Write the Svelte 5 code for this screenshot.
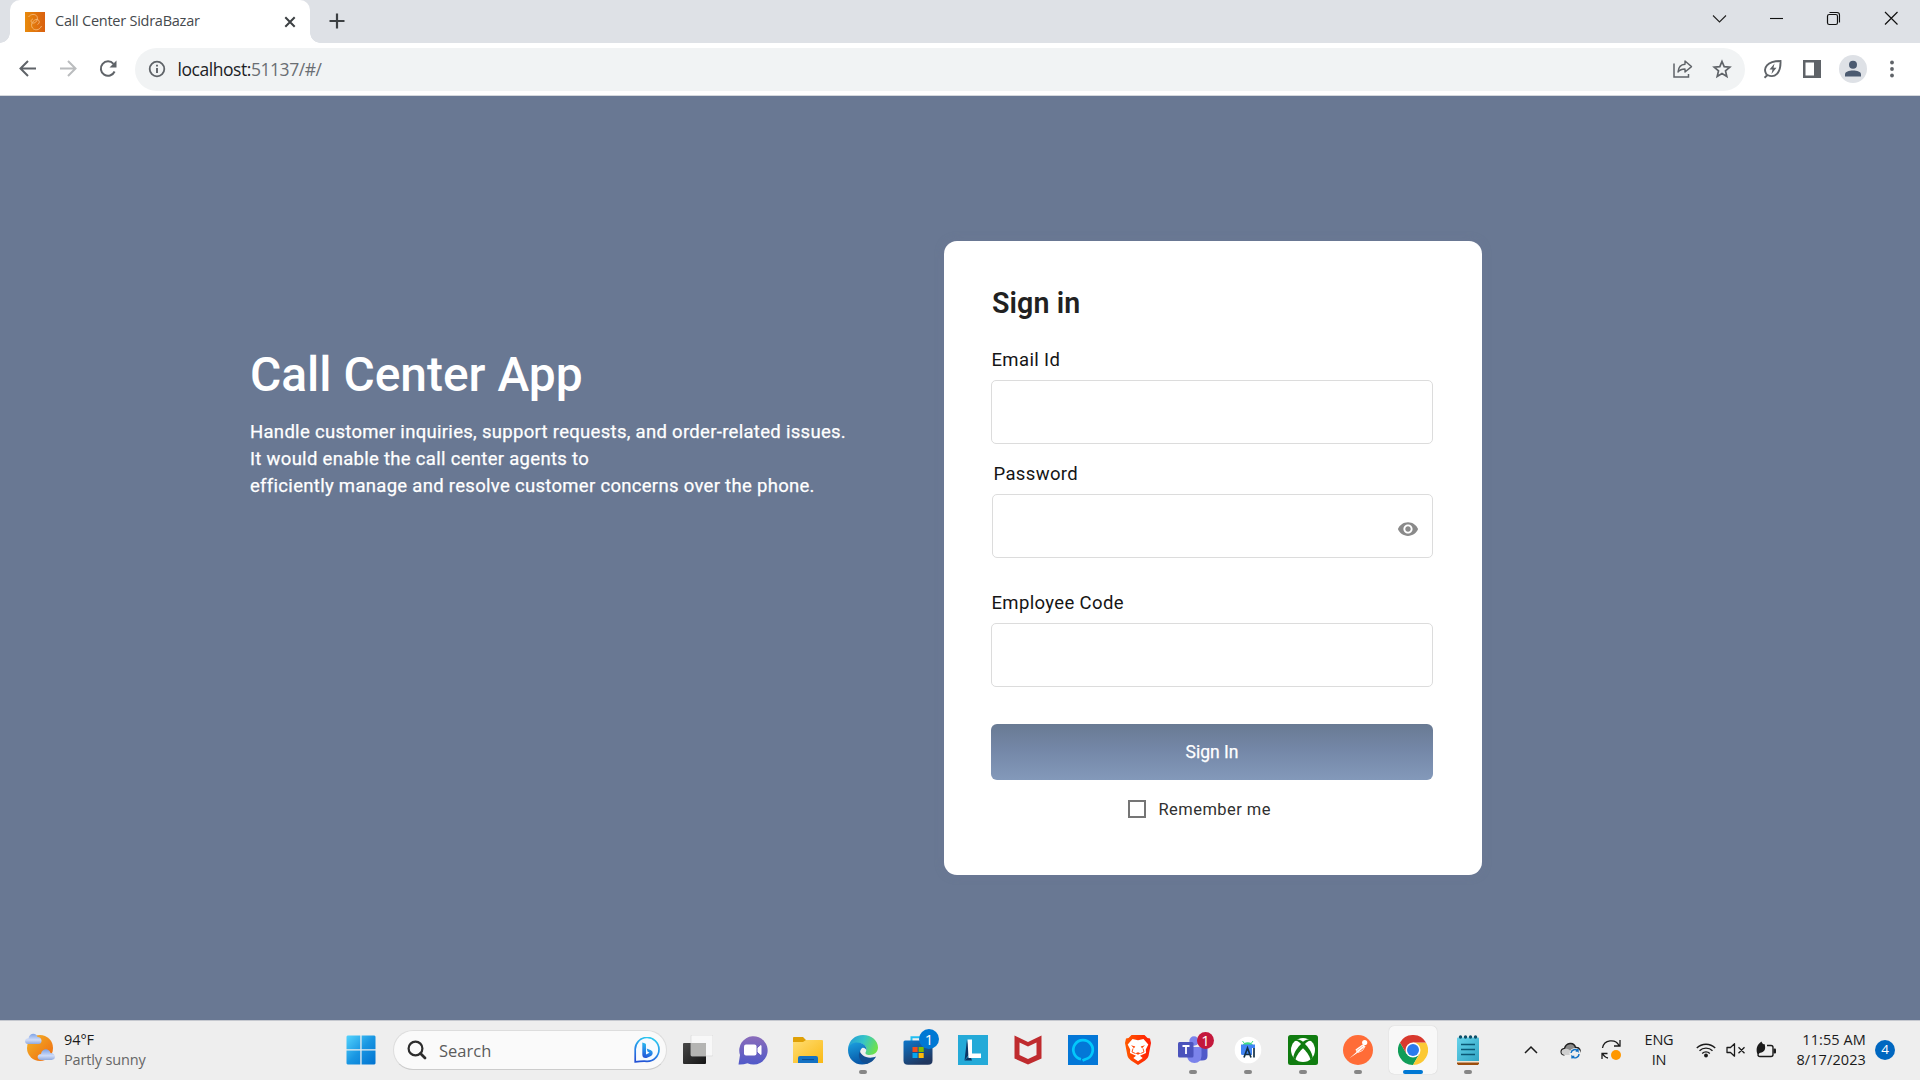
<script>
  let email = $state('');
  let password = $state('');
  let code = $state('');
  let remember = $state(false);
</script>

<div class="screen">
  <header class="tabstrip">
    <div class="tab">
      <svg class="favicon" width="20" height="20" viewBox="0 0 20 20">
        <defs><linearGradient id="fav" x1="0" x2="1"><stop offset="0" stop-color="#e88a0c" /><stop offset="1" stop-color="#d9600f" /></linearGradient></defs>
        <rect width="20" height="20" fill="url(#fav)" />
        <g fill="none" stroke="#f5b978" stroke-width=".9"><path d="M3.500 5C5.500 1.800 10.500 1.500 12 4.500C13.500 8 10.500 11.500 7.800 11C5.500 10.500 5.500 7.500 8 7" /><path d="M16.500 14C15 17.500 11.500 18.800 8.500 17C5 14.500 6.500 9 11 7.500C14.500 7 15.500 11 12.500 12.500" /></g>
      </svg>
      <span class="tabtitle">Call Center SidraBazar</span>
      <svg width="12" height="12" viewBox="0 0 12 12"><path d="M1.300 1.300L10.700 10.700M10.700 1.300L1.300 10.700" stroke="#3c4043" stroke-width="2" /></svg>
    </div>
    <svg class="plus" width="16" height="16" viewBox="0 0 16 16"><path d="M8 .5V15.500M.5 8H15.500" stroke="#3c4043" stroke-width="2.200" /></svg>
    <div class="winbtns">
      <svg width="58" height="36" viewBox="0 0 58 36"><path d="M23 15.500L29.500 22L36 15.500" fill="none" stroke="#222" stroke-width="1.100" /></svg>
      <svg width="57" height="36" viewBox="0 0 57 36"><path d="M22 18.500H35" stroke="#111" stroke-width="1.100" /></svg>
      <svg width="57" height="36" viewBox="0 0 57 36"><rect x="22.500" y="14.500" width="10" height="10" rx="1.800" fill="none" stroke="#111" stroke-width="1.200" /><path d="M24.500 12.500H32Q34.500 12.500 34.500 15V22.500" fill="none" stroke="#111" stroke-width="1.100" /></svg>
      <svg width="58" height="36" viewBox="0 0 58 36"><path d="M23 12L35.500 24.500M35.500 12L23 24.500" stroke="#111" stroke-width="1.200" /></svg>
    </div>
  </header>

  <nav class="toolbar">
    <svg width="40" height="40" viewBox="0 0 40 40"><path d="M28 19.500H12.500M20 12L12.500 19.500L20 27" fill="none" stroke="#5f6368" stroke-width="2" /></svg>
    <svg width="40" height="40" viewBox="0 0 40 40"><path d="M12 19.500H27.500M20 12L27.500 19.500L20 27" fill="none" stroke="#babcbe" stroke-width="2" /></svg>
    <svg width="40" height="40" viewBox="0 0 40 40"><path d="M26.600 22.500A7.200 7.200 0 1 1 25.500 14.800" fill="none" stroke="#5f6368" stroke-width="2" /><path d="M28.500 11.500V18.500H21.500Z" fill="#5f6368" /></svg>
    <div class="omnibox">
      <svg width="18" height="18" viewBox="0 0 18 18"><circle cx="9" cy="9" r="7.300" fill="none" stroke="#5f6368" stroke-width="1.800" /><path d="M9 8V13M9 4.800V6.600" stroke="#5f6368" stroke-width="1.900" /></svg>
      <span class="url">localhost:<i>51137/#/</i></span>
      <svg class="share" width="20" height="20" viewBox="0 0 20 20"><path d="M1 4.500V18H15.500V15" fill="none" stroke="#5f6368" stroke-width="1.500" /><path d="M5 13C5.500 7.500 8 5.500 12 5.300V2L18.500 7.600L12 13V10C9 10 7 10.500 5 13Z" fill="none" stroke="#5f6368" stroke-width="1.400" stroke-linejoin="round" /></svg>
      <svg width="20" height="20" viewBox="0 0 20 20"><path d="M10 2.500L12.200 7.700L17.800 8.200L13.500 11.900L14.800 17.400L10 14.500L5.200 17.400L6.500 11.900L2.200 8.200L7.800 7.700Z" fill="none" stroke="#5f6368" stroke-width="1.700" /></svg>
    </div>
    <svg class="leaf" width="20" height="20" viewBox="0 0 20 20"><path d="M3.500 15.500C-.5 9 4 2 17.500 2C18 14 12 19.500 4.500 16L1.500 18.700" fill="none" stroke="#5f6368" stroke-width="1.900" /><path d="M11.500 4.500L6.500 10.500H9.500L8.500 15L13.500 8.700H10.500Z" fill="#5f6368" /></svg>
    <svg class="panel" width="18" height="18" viewBox="0 0 18 18"><path fill-rule="evenodd" d="M0 0H18V18H0ZM2.500 2.500V15.500H11V2.500Z" fill="#5f6368" /></svg>
    <svg class="avatar" width="28" height="28" viewBox="0 0 28 28"><circle cx="14" cy="14" r="14" fill="#dee1e6" /><circle cx="14" cy="9.800" r="4" fill="#4b5a70" /><path d="M6 21.500V19.500C6 16.500 10 15.500 14 15.500S22 16.500 22 19.500V21.500Z" fill="#4b5a70" /></svg>
    <svg class="kebab" width="6" height="18" viewBox="0 0 6 18"><g fill="#5f6368"><circle cx="3" cy="2.500" r="1.900" /><circle cx="3" cy="9" r="1.900" /><circle cx="3" cy="15.500" r="1.900" /></g></svg>
  </nav>

  <main>
    <section class="intro">
      <h1>Call Center App</h1>
      <p>Handle customer inquiries, support requests, and order-related issues.<br />It would enable the call center agents to<br />efficiently manage and resolve customer concerns over the phone.</p>
    </section>
    <form class="card">
      <h2>Sign in</h2>
      <label for="email">Email Id</label>
      <input id="email" type="email" bind:value={email} />
      <label for="pw" class="pwlabel">Password</label>
      <div class="pwbox">
        <input id="pw" type="password" bind:value={password} />
        <svg width="22" height="22" viewBox="0 0 24 24"><path fill="#8a8a8a" d="M12 4.500C7 4.500 2.730 7.610 1 12c1.730 4.390 6 7.500 11 7.500s9.270-3.110 11-7.500c-1.730-4.390-6-7.500-11-7.500zM12 17c-2.760 0-5-2.240-5-5s2.240-5 5-5 5 2.240 5 5-2.240 5-5 5zm0-8c-1.660 0-3 1.340-3 3s1.340 3 3 3 3-1.340 3-3-1.340-3-3-3z" /></svg>
      </div>
      <label for="code" class="codelabel">Employee Code</label>
      <input id="code" type="text" bind:value={code} />
      <button type="button">Sign In</button>
      <label class="remember"><input type="checkbox" bind:checked={remember} /><span>Remember me</span></label>
    </form>
  </main>

  <footer>
    <div class="weather">
      <svg width="32" height="32" viewBox="0 0 32 32">
        <defs><linearGradient id="sun" x1="0" y1="0" x2="1" y2="1"><stop offset="0" stop-color="#f3b628" /><stop offset="1" stop-color="#ef6710" /></linearGradient><linearGradient id="cl" x1="0" y1="0" x2="0" y2="1"><stop offset="0" stop-color="#7fa3e6" /><stop offset=".6" stop-color="#cfdcf8" /><stop offset="1" stop-color="#8fa9de" /></linearGradient></defs>
        <circle cx="16" cy="16" r="13" fill="url(#sun)" />
        <path d="M4 12C0 12 0 6 4.500 6.500C5 1 12 0 13.500 5C18.500 5 19 12 14.500 12Z" fill="url(#cl)" />
        <path d="M17 28C12.500 28 12.500 22 17 22C18 16 25 16 26.500 21C32 21 32.500 28 27.500 28Z" fill="url(#cl)" />
      </svg>
      <div><b>94°F</b><span>Partly sunny</span></div>
    </div>
    <svg class="start" width="30" height="30" viewBox="0 0 30 30">
      <defs><linearGradient id="win" x1="0" y1="0" x2="1" y2="1"><stop offset="0" stop-color="#53d3fd" /><stop offset=".5" stop-color="#1996e2" /><stop offset="1" stop-color="#0072d0" /></linearGradient></defs>
      <path fill="url(#win)" d="M1.500 .5H14.300V14.300H.5V1.500ZM15.600 .5H28.500L29.500 1.500V14.300H15.600ZM.5 15.600H14.300V29.500H1.500L.5 28.500ZM15.600 15.600H29.500V28.500L28.500 29.500H15.600Z" />
    </svg>
    <div class="search">
      <svg width="20" height="20" viewBox="0 0 20 20"><circle cx="8.500" cy="8.500" r="6.900" fill="none" stroke="#2c2c2c" stroke-width="2.200" /><path d="M13.500 13.500L18 18" stroke="#2c2c2c" stroke-width="2.800" stroke-linecap="round" /></svg>
      <span>Search</span>
      <svg width="26" height="26" viewBox="0 0 26 26">
        <defs><linearGradient id="bing" x1=".6" y1="0" x2=".3" y2="1"><stop offset="0" stop-color="#2cc8ee" /><stop offset=".55" stop-color="#2689e8" /><stop offset="1" stop-color="#2453d5" /></linearGradient></defs>
        <path d="M1.200 24.800L1.200 13A11.900 11.900 0 1 1 13 24.300Q8 24 1.200 24.800Z" fill="#f7fbff" stroke="url(#bing)" stroke-width="1.700" />
        <path d="M8.300 5.500L11.300 6.500Q12 6.800 12 7.700V17.500L15.500 15.800L13.500 14.500L12.700 11.500L17 13.300Q19.300 14.500 18.600 17Q18 18.500 16 19.500L12.500 21Q8.300 21.500 8.300 17.500Z" fill="url(#bing)" />
      </svg>
    </div>

    <div class="apps">
      <div class="app"><svg viewBox="0 0 30 30">
        <defs><linearGradient id="tv" x1="0" y1="0" x2="1" y2="1"><stop offset="0" stop-color="#484848" /><stop offset="1" stop-color="#151515" /></linearGradient></defs>
        <rect x="0" y="8" width="23" height="21" rx="1" fill="url(#tv)" /><rect x="8" y="0" width="22" height="21" rx="1" fill="#f8f8f8" stroke="#d8d8d8" stroke-width=".7" /><rect x="8" y="8" width="15" height="13" fill="#b5b5b3" /></svg></div>
      <div class="app"><svg viewBox="0 0 30 30">
        <defs><linearGradient id="chat" x1="0" y1="0" x2="0" y2="1"><stop offset="0" stop-color="#8a6cba" /><stop offset="1" stop-color="#5059c9" /></linearGradient></defs>
        <path d="M.5 29.500L2 20A14.200 14.200 0 1 1 9.500 28.300Q5 29.800 .5 29.500Z" fill="url(#chat)" /><rect x="6" y="9.500" width="12.500" height="11" rx="2" fill="#fff" /><path d="M20 13L23 10.500V19.500L20 17Z" fill="#fff" stroke="#fff" stroke-linejoin="round" /></svg></div>
      <div class="app"><svg viewBox="0 0 30 30">
        <defs><linearGradient id="fold" x1="0" y1="0" x2="1" y2="1"><stop offset="0" stop-color="#ffdd72" /><stop offset="1" stop-color="#fab914" /></linearGradient></defs>
        <path d="M0 2.500Q0 2 1 2H10L13 5H20V12H0Z" fill="#dfa006" /><path d="M0 7H10L13 5H29Q30 5 30 6V28H0Z" fill="url(#fold)" /><path d="M5 28V23Q5 21 7 21H23Q25 21 25 23V28Z" fill="#1472c4" /><path d="M9 24.600H21" stroke="#0b4c91" /></svg></div>
      <div class="app run"><svg viewBox="0 0 30 30">
        <defs><linearGradient id="e1" x1="0" y1=".2" x2="1" y2=".5"><stop offset="0" stop-color="#239bd9" /><stop offset=".5" stop-color="#35c5c7" /><stop offset="1" stop-color="#6fe14c" /></linearGradient><linearGradient id="e2" x1="0" y1="0" x2=".3" y2="1"><stop offset="0" stop-color="#1ba1e0" /><stop offset="1" stop-color="#0757a7" /></linearGradient></defs>
        <path d="M0 14C1 5 7 0 15 0C24 0 30 6 30 12.500C30 17 26.500 20 21.500 20C18.500 20 16.500 19 18 16.500C20 11 15 8 9.500 8C5 8 1.500 10.500 0 14Z" fill="url(#e1)" />
        <path d="M0 15C0 10 4.500 7.500 9 7.500C15 7.500 19 11 18.500 15C15 10 12 14 12 18C12 23 15.500 27 20 28.500C9 32.500 0 25 0 15Z" fill="url(#e2)" />
        <path d="M12 16C9 21 12 28 19 29C23.500 27.500 27 24 28 21.500C25 23 18 23.500 14.500 20C12.500 18 12 17 12 16Z" fill="#124f92" /></svg></div>
      <div class="app"><svg viewBox="0 0 30 30">
        <defs><linearGradient id="st" x1="0" y1="0" x2=".5" y2="1"><stop offset="0" stop-color="#0d77cb" /><stop offset="1" stop-color="#203760" /></linearGradient></defs>
        <path d="M8.500 7V2.200H20.500V7" fill="none" stroke="#23bff1" stroke-width="2" /><path d="M.5 7Q.5 5.500 2 5.500H28Q29.500 5.500 29.500 7V25.500Q29.500 29.800 25 29.800H5Q.5 29.800 .5 25.500Z" fill="url(#st)" /><path d="M9.500 12H14.600V17H9.500Z" fill="#f34f1c" /><path d="M15.600 12H20.700V17H15.600Z" fill="#7fbc00" /><path d="M9.500 18H14.600V23H9.500Z" fill="#05a6f0" /><path d="M15.600 18H20.700V23H15.600Z" fill="#ffba08" /></svg><span class="badge blue">1</span></div>
      <div class="app"><svg viewBox="0 0 30 30"><rect width="30" height="30" fill="#24aad8" /><path d="M9 4.500L6.500 25.500L12 18Z" fill="#0b3564" /><path d="M6.500 25.500H14L12 20Z" fill="#0b3564" /><path d="M9.500 4.500H14V18.500H23V23H10.500Z" fill="#fff" /></svg></div>
      <div class="app"><svg viewBox="0 0 30 30"><path d="M1.500 .5L15 7L28.500 .5V23.500L15 29.500L1.500 23.500ZM6.500 7.500V20L15 24L23.500 20V7.500L15 11.500Z" fill="#bf2b2e" fill-rule="evenodd" /></svg></div>
      <div class="app"><svg viewBox="0 0 30 30"><rect width="30" height="30" fill="#0377d7" /><path d="M13 24.300A9.700 9.700 0 1 1 17.500 24.200L14.500 25.500" fill="none" stroke="#03c8fb" stroke-width="2.700" /></svg></div>
      <div class="app"><svg viewBox="0 0 30 30">
        <defs><linearGradient id="br" x1="0" x2="1"><stop offset="0" stop-color="#ff5a00" /><stop offset="1" stop-color="#ff1c05" /></linearGradient></defs>
        <path d="M8.500 0H21.500L24.500 3L27 3.500L28 8L25.500 21Q25 23.500 22 25.500L15 30L8 25.500Q5 23.500 4.500 21L2 8L3 3.500L5.500 3Z" fill="url(#br)" />
        <path d="M9.500 4L15 5.200L20.500 4L25.300 9.500L22.800 14.500L23 18L17 20.800L19.700 23L15 26.300L10.300 23L13 20.800L7 18L7.200 14.500L4.700 9.500Z" fill="#fff" />
        <path d="M8 10.300L12.300 11.600L11 13.300ZM22 10.300L17.700 11.600L19 13.300ZM12.500 18.300L15 19.700L17.500 18.300L15 17.300Z" fill="#ff4606" /><path d="M10 13.500L9 17L12.500 18.500M20 13.500L21 17L17.500 18.500" fill="none" stroke="#ff4606" stroke-width=".9" /></svg></div>
      <div class="app run"><svg viewBox="0 0 30 30"><circle cx="25" cy="8" r="3.500" fill="#505ac0" /><circle cx="16" cy="6" r="4.700" fill="#7b83eb" /><path d="M21 12H29.500V21Q29.500 25.500 24 25.500H20Z" fill="#5059c9" /><path d="M9 12H23.500V21Q23 28 16.500 28T9 21Z" fill="#7b83eb" /><rect x="0" y="7" width="15.500" height="15.500" rx="1.500" fill="#4b53bc" /><path d="M4.500 11H11.500M8 11V19" stroke="#fff" stroke-width="1.800" /></svg><span class="badge red">1</span></div>
      <div class="app run"><svg viewBox="0 0 30 30"><circle cx="15" cy="15" r="13.300" fill="#fff" /><path d="M9.500 10.500C10 6 19.500 6 20 10.500Z" fill="#3ddc84" /><path d="M11 8L9.500 6M18.500 8L20 6" stroke="#3ddc84" /><path d="M8 9.500H22V13H19V20H9.500Q8 20 8 18.500Z" fill="#4285f4" /><path d="M11 22.500L14.500 13L18 22.500M12.500 19.500H16.800M21 13V22.500" fill="none" stroke="#123047" stroke-width="1.700" /></svg></div>
      <div class="app run"><svg viewBox="0 0 30 30"><rect width="30" height="30" rx="2.500" fill="#107c10" /><circle cx="15" cy="15" r="12" fill="#fff" /><path d="M6.500 4.500C10 3.800 13 5.500 15 6.800C17 5.500 20 3.800 23.500 4.500L24 6C21 5 18 7.500 17 9C20 12 24 17 24.700 22.500L22.500 24.700C21.500 20 17.500 15.500 15 13.200C12.500 15.500 8.500 20 7.500 24.700L5.300 22.500C6 17 10 12 13 9C12 7.500 9 5 6 6Z" fill="#107c10" /></svg></div>
      <div class="app run"><svg viewBox="0 0 30 30"><circle cx="15" cy="15" r="15" fill="#ff6c37" /><circle cx="21.700" cy="7.500" r="2.600" fill="#fff" /><path d="M19.500 9.500L12.500 14.500L13.500 17L6.500 23.300L15 17.500L22.500 11Z" fill="#fff" /><path d="M13.500 15.800L20 11" stroke="#ff9a75" stroke-width=".7" /><path d="M22 11.500L19.500 15.500L15 17.500" fill="none" stroke="#fff" stroke-width=".8" /></svg></div>
      <div class="app run active"><svg viewBox="0 0 30 30"><path d="M2 7.500A15 15 0 0 0 15 30L21.300 19L15 15L8.700 19Z" fill="#109d58" /><path d="M28 7.500A15 15 0 0 1 15 30L21.500 18.700L15 7.500Z" fill="#fcc934" /><path d="M2 7.500A15 15 0 0 1 28 7.500H15L8.500 18.700Z" fill="#d8392e" /><circle cx="15" cy="15" r="7.500" fill="#fff" /><circle cx="15" cy="15" r="6" fill="#2b7bed" /></svg></div>
      <div class="app run"><svg viewBox="0 0 30 30">
        <defs><linearGradient id="np" x1="0" y1="0" x2="1" y2="1"><stop offset="0" stop-color="#66d2ea" /><stop offset="1" stop-color="#2fa4c4" /></linearGradient></defs>
        <rect x="4" y="2.500" width="22" height="24" rx="1" fill="url(#np)" /><rect x="4" y="26" width="22" height="1.500" fill="#f1e4d2" /><path d="M4 27.500H26V28.500L25 30H5L4 28.500Z" fill="#9c4e0d" /><path d="M8 9.500H22M8 14.500H22M8 19.500H22" stroke="#0b5775" stroke-width="1.700" /><g fill="#0d506a"><circle cx="7.500" cy="2" r="1.700" /><circle cx="12.500" cy="2" r="1.700" /><circle cx="17.500" cy="2" r="1.700" /><circle cx="22.500" cy="2" r="1.700" /></g></svg></div>
    </div>

    <div class="tray">
      <svg width="14" height="14" viewBox="0 0 14 14"><path d="M1 10L7 4L13 10" fill="none" stroke="#1b1b1b" stroke-width="1.500" /></svg>
      <svg class="cloud" width="21" height="18" viewBox="0 0 21 18"><path d="M4.500 14C0 13.500 0 8 4.500 7.500C6 1.500 14 .5 15.500 6.500C20 6 21 10 19 12" fill="#8b8b8b" stroke="#202020" stroke-width="1.400" /><path d="M4.500 14C.5 13.500 .5 8.500 4.500 8C7 7 9 8 12 11L13 14Z" fill="#cfcfcf" /><circle cx="15" cy="12.500" r="5.500" fill="#eee" /><path d="M11 12A4 4 0 0 1 18 10V8M18 10H15.700M19 13A4 4 0 0 1 12 15.500V17.500M12 15.500H14.300" fill="none" stroke="#1271c4" stroke-width="1.400" /></svg>
      <svg class="sync" width="21" height="22" viewBox="0 0 21 22"><path d="M1.500 9C3 .5 14.500-.5 18 6.500M19 1V7H13M7 19C4 18.500 2.500 16.500 1.500 14.500M1 20V14.500H6.500" fill="none" stroke="#1b1b1b" stroke-width="1.300" /><circle cx="15" cy="16" r="5" fill="#ff9800" /></svg>
      <div class="lang">ENG<br />IN</div>
      <svg class="wifi" width="20" height="16" viewBox="0 0 20 16"><g fill="none" stroke="#1b1b1b" stroke-width="1.400"><path d="M.8 6A13 13 0 0 1 19.200 6M3.500 8.800A9.200 9.200 0 0 1 16.500 8.800M6.200 11.400A5.400 5.400 0 0 1 13.800 11.400" /></g><circle cx="10" cy="13.500" r="1.900" fill="#1b1b1b" /></svg>
      <svg class="mute" width="20" height="16" viewBox="0 0 20 16"><path d="M1 5.500H4.500L8.500 1.800V14.200L4.500 10.500H1ZM12.500 5.200L18.500 11.200M18.500 5.200L12.500 11.200" fill="none" stroke="#1b1b1b" stroke-width="1.300" stroke-linejoin="round" /></svg>
      <svg class="bat" width="21" height="18" viewBox="0 0 21 18"><path d="M11 4.500H15Q17 4.500 17 6.500V13.500Q17 15.500 15 15.500H4Q2 15.500 2 13.500" fill="none" stroke="#1b1b1b" stroke-width="1.400" /><rect x="17.500" y="7.500" width="2.500" height="5" rx="1" fill="#1b1b1b" /><path d="M1 12C0 7 1 4 5.500 .5C6 2.500 7.500 3.500 8.500 3C10 7 9 10.500 5.500 11.500L3.500 12L2 14.500Z" fill="#1b1b1b" /></svg>
      <div class="clock">11:55 AM<br />8/17/2023</div>
      <span class="notif">4</span>
    </div>
  </footer>
</div>

<style>
  :global(body) { margin: 0; overflow: hidden; }
  * { box-sizing: border-box; }
  svg { display: block; flex: none; }
  .screen { width: 1920px; height: 1080px; display: flex; flex-direction: column; font-family: "Open Sans", "Noto Sans", sans-serif; background: #697893; }

  .tabstrip { height: 43px; flex: none; background: #dee1e6; display: flex; align-items: flex-start; padding-left: 10px; }
  .tab { position: relative; width: 300px; height: 43px; background: #fff; border-radius: 10px 10px 0 0; display: flex; align-items: center; padding: 0 14px 0 15px; }
  .tab::before, .tab::after { content: ""; position: absolute; bottom: 0; width: 10px; height: 10px; }
  .tab::before { left: -10px; background: radial-gradient(circle at 0 0, transparent 9.5px, #fff 10px); }
  .tab::after { right: -10px; background: radial-gradient(circle at 100% 0, transparent 9.5px, #fff 10px); }
  .tabtitle { flex: 1; margin: 0 0 2px 10px; font-size: 14.500px; letter-spacing: -0.25px; color: #45494d; white-space: nowrap; }
  .plus { margin: 13px 0 0 19px; }
  .winbtns { margin-left: auto; display: flex; }

  .toolbar { height: 53px; flex: none; background: #fff; border-bottom: 1px solid #d5d8dd; display: flex; align-items: center; padding: 0 25px 0 7.500px; }
  .omnibox { width: 1610px; height: 43px; margin-left: 7.500px; border-radius: 22px; background: #f1f3f4; display: flex; align-items: center; padding: 0 13px; }
  .url { margin-left: 11.500px; flex: 1; font-size: 17.500px; letter-spacing: -0.45px; color: #202124; }
  .url i { font-style: normal; color: #6a6e73; }
  .share { margin-right: 19px; }
  .leaf { margin-left: 17.500px; }
  .panel { margin-left: 20.500px; }
  .avatar { margin-left: 18px; }
  .kebab { margin-left: 22px; }

  main { flex: 1; background: #697893; display: flex; align-items: flex-start; font-family: Roboto, sans-serif; }
  .intro { width: 943.500px; padding-left: 250px; margin-top: 249px; color: #fff; white-space: nowrap; flex: none; }
  h1 { margin: 0; font-size: 47.900px; line-height: 60px; font-weight: 500; }
  p { margin: 14px 0 0; font-size: 18.500px; line-height: 27px; font-weight: 400; letter-spacing: 0.3px; -webkit-text-stroke: 0.25px #fff; }
  .card { width: 538px; height: 634px; margin-top: 145px; background: #fff; border-radius: 13px; padding: 45px 48px 0 47.500px; display: flex; flex-direction: column; box-shadow: 0 0 10px rgba(110, 120, 150, .4); }
  h2 { margin: 0 0 0 1px; font-size: 28.600px; line-height: 34px; font-weight: 600; color: #212121; letter-spacing: 0.1px; }
  label { font-size: 18.500px; line-height: 24px; color: #151515; margin: 28px 0 0 .5px; height: 24px; flex: none; letter-spacing: 0.36px; }
  label + input, .pwbox { margin-top: 8px; }
  input:not([type='checkbox']) { width: 442px; height: 64px; flex: none; border: 1px solid #dcdcdc; border-radius: 5px; background: #fff; padding: 0 16px; outline: none; font: 18px Roboto, sans-serif; }
  .pwlabel { margin: 18px 0 0 2.500px; }
  .pwbox { display: flex; align-items: center; width: 441px; height: 64px; flex: none; margin-left: 1px; border: 1px solid #dcdcdc; border-radius: 5px; padding-right: 13px; }
  .pwbox input:not([type='checkbox']) { flex: 1; width: auto; min-width: 0; height: 60px; border: 0; }
  .pwbox svg { margin-top: 5px; }
  .codelabel { margin-top: 33px; }
  button { width: 442px; height: 56px; flex: none; margin-top: 37px; border: 0; border-radius: 6px; background: linear-gradient(#697a93, #7487a7 45%, #8399ba); color: #fff; font: 400 17.500px Roboto, sans-serif; -webkit-text-stroke: 0.25px #fff; }
  .remember { display: flex; align-items: center; gap: 13px; margin: 17px 0 0 136.500px; font-size: 16.500px; color: #303030; letter-spacing: 0.45px; }
  .remember span { padding-top: 1px; }
  .remember input { appearance: none; width: 18px; height: 18px; margin: 0; border: 2px solid #757575; background: #fff; }

  footer { height: 60px; flex: none; background: #eee; border-top: 1px solid #c5c8cf; display: flex; align-items: center; padding: 0 0 1px 24px; }
  .weather { display: flex; width: 322px; align-items: center; gap: 8px; }
  .weather svg { margin-top: -4px; }
  .weather b, .weather span { display: block; font-weight: 400; font-size: 14.500px; line-height: 20px; color: #1b1b1b; letter-spacing: -0.15px; }
  .weather b { letter-spacing: -0.1px; }
  .weather span { color: #666; }
  .search { width: 274px; height: 40px; margin-left: 17px; border: 1px solid #ddd; border-bottom-color: #ccc; border-radius: 20px; background: #fafafa; display: flex; align-items: center; padding: 0 6px 0 13px; }
  .search span { flex: 1; margin-left: 12px; font-size: 16.500px; color: #5c5c5c; }
  .apps { display: flex; margin-left: 3px; }
  .app { position: relative; width: 55px; height: 59px; display: flex; align-items: center; justify-content: center; }
  .app svg { position: relative; width: 30px; height: 30px; }
  .run::after { content: ""; position: absolute; left: 24px; bottom: 6px; width: 8px; height: 4px; border-radius: 2px; background: #868686; }
  .active::before { content: ""; position: absolute; left: 4px; top: 5px; width: 48px; height: 48px; border-radius: 5px; background: #f8f8f8; box-shadow: 0 0 1px #bbb; }
  .active::after { left: 18px; width: 20px; background: #0078d4; }
  .badge { position: absolute; border-radius: 50%; color: #fff; text-align: center; font-size: 15px; }
  .blue { left: 29px; top: 8px; width: 20px; height: 20px; line-height: 20px; background: #0078d4; }
  .red { left: 32px; top: 11px; width: 17px; height: 17px; line-height: 17px; background: #c4183c; font-weight: 500; font-size: 15px; }

  .tray { flex: 1; display: flex; align-items: center; margin-left: 29px; color: #1b1b1b; font-size: 14.500px; line-height: 20px; }
  .cloud { margin-left: 22px; }
  .sync { margin-left: 19.500px; }
  .lang { width: 40px; margin-left: 17.500px; text-align: center; letter-spacing: -0.2px; }
  .wifi { margin-left: 17px; }
  .mute { margin-left: 9.500px; }
  .bat { margin-left: 10.500px; }
  .clock { width: 80px; margin-left: 9px; text-align: right; white-space: nowrap; letter-spacing: 0.1px; }
  .notif { width: 20px; height: 20px; margin-left: 9px; border-radius: 50%; background: #0067c0; color: #fff; font-size: 13.500px; line-height: 19px; text-align: center; }
</style>
